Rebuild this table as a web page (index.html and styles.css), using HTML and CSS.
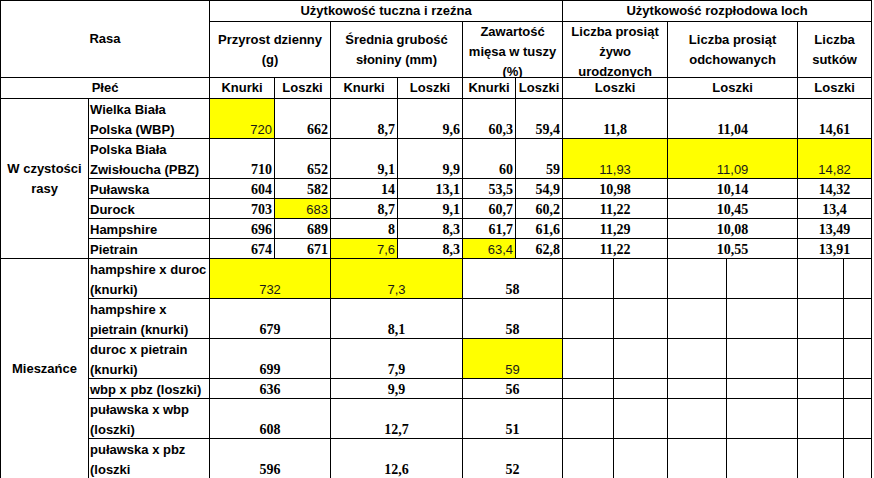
FILE: index.html
```html
<!DOCTYPE html>
<html lang="pl">
<head>
<meta charset="utf-8">
<title>Rasy świń</title>
<link rel="stylesheet" href="styles.css">
</head>
<body>
<table class="sheet">
  <colgroup>
    <col class="w88"><col class="w121"><col class="w65"><col class="w56"><col class="w67"><col class="w65"><col class="w53"><col class="w47"><col class="w51"><col class="w54"><col class="w59"><col class="w71"><col class="w46"><col class="w28">
  </colgroup>
  <thead>
    <tr class="r20">
      <th colspan="2" rowspan="2">Rasa</th>
      <th colspan="6">Użytkowość tuczna i rzeźna</th>
      <th colspan="6">Użytkowość rozpłodowa loch</th>
    </tr>
    <tr class="r56">
      <th colspan="2">Przyrost dzienny (g)</th>
      <th colspan="2">Średnia grubość słoniny (mm)</th>
      <th colspan="2" class="top"><div class="clip">Zawartość mięsa w tuszy (%)</div></th>
      <th colspan="2" class="top"><div class="clip">Liczba prosiąt żywo urodzonych</div></th>
      <th colspan="2">Liczba prosiąt odchowanych</th>
      <th colspan="2">Liczba sutków</th>
    </tr>
    <tr class="r20">
      <th colspan="2">Płeć</th>
      <th>Knurki</th><th>Loszki</th><th>Knurki</th><th>Loszki</th><th>Knurki</th><th>Loszki</th>
      <th colspan="2">Loszki</th><th colspan="2">Loszki</th><th colspan="2">Loszki</th>
    </tr>
  </thead>
  <tbody>
    <tr class="r40">
      <th rowspan="6" class="group">W czystości rasy</th>
      <td class="name"><div class="b">Wielka Biała Polska (WBP)</div></td>
      <td class="num y"><div class="b">720</div></td>
      <td class="num"><div class="b">662</div></td>
      <td class="num"><div class="b">8,7</div></td>
      <td class="num"><div class="b">9,6</div></td>
      <td class="num"><div class="b">60,3</div></td>
      <td class="num"><div class="b">59,4</div></td>
      <td class="num mid" colspan="2"><div class="b">11,8</div></td>
      <td class="num mid" colspan="2"><div class="b">11,04</div></td>
      <td class="num mid" colspan="2"><div class="b">14,61</div></td>
    </tr>
    <tr class="r40">
      <td class="name"><div class="b">Polska Biała Zwisłoucha (PBZ)</div></td>
      <td class="num"><div class="b">710</div></td>
      <td class="num"><div class="b">652</div></td>
      <td class="num"><div class="b">9,1</div></td>
      <td class="num"><div class="b">9,9</div></td>
      <td class="num"><div class="b">60</div></td>
      <td class="num"><div class="b">59</div></td>
      <td class="num mid y" colspan="2"><div class="b">11,93</div></td>
      <td class="num mid y" colspan="2"><div class="b">11,09</div></td>
      <td class="num mid y" colspan="2"><div class="b">14,82</div></td>
    </tr>
    <tr class="r20">
      <td class="name"><div class="b">Puławska</div></td>
      <td class="num"><div class="b">604</div></td>
      <td class="num"><div class="b">582</div></td>
      <td class="num"><div class="b">14</div></td>
      <td class="num"><div class="b">13,1</div></td>
      <td class="num"><div class="b">53,5</div></td>
      <td class="num"><div class="b">54,9</div></td>
      <td class="num mid" colspan="2"><div class="b">10,98</div></td>
      <td class="num mid" colspan="2"><div class="b">10,14</div></td>
      <td class="num mid" colspan="2"><div class="b">14,32</div></td>
    </tr>
    <tr class="r20">
      <td class="name"><div class="b">Durock</div></td>
      <td class="num"><div class="b">703</div></td>
      <td class="num y"><div class="b">683</div></td>
      <td class="num"><div class="b">8,7</div></td>
      <td class="num"><div class="b">9,1</div></td>
      <td class="num"><div class="b">60,7</div></td>
      <td class="num"><div class="b">60,2</div></td>
      <td class="num mid" colspan="2"><div class="b">11,22</div></td>
      <td class="num mid" colspan="2"><div class="b">10,45</div></td>
      <td class="num mid" colspan="2"><div class="b">13,4</div></td>
    </tr>
    <tr class="r20">
      <td class="name"><div class="b">Hampshire</div></td>
      <td class="num"><div class="b">696</div></td>
      <td class="num"><div class="b">689</div></td>
      <td class="num"><div class="b">8</div></td>
      <td class="num"><div class="b">8,3</div></td>
      <td class="num"><div class="b">61,7</div></td>
      <td class="num"><div class="b">61,6</div></td>
      <td class="num mid" colspan="2"><div class="b">11,29</div></td>
      <td class="num mid" colspan="2"><div class="b">10,08</div></td>
      <td class="num mid" colspan="2"><div class="b">13,49</div></td>
    </tr>
    <tr class="r20">
      <td class="name"><div class="b">Pietrain</div></td>
      <td class="num"><div class="b">674</div></td>
      <td class="num"><div class="b">671</div></td>
      <td class="num y"><div class="b">7,6</div></td>
      <td class="num"><div class="b">8,3</div></td>
      <td class="num y"><div class="b">63,4</div></td>
      <td class="num"><div class="b">62,8</div></td>
      <td class="num mid" colspan="2"><div class="b">11,22</div></td>
      <td class="num mid" colspan="2"><div class="b">10,55</div></td>
      <td class="num mid" colspan="2"><div class="b">13,91</div></td>
    </tr>

    <tr class="r40">
      <th rowspan="6" class="group">Mieszańce</th>
      <td class="name"><div class="b">hampshire x duroc (knurki)</div></td>
      <td class="num mid y" colspan="2"><div class="b">732</div></td>
      <td class="num mid y" colspan="2"><div class="b">7,3</div></td>
      <td class="num mid" colspan="2"><div class="b">58</div></td>
      <td></td><td></td><td></td><td></td><td></td><td></td>
    </tr>
    <tr class="r40">
      <td class="name"><div class="b">hampshire x pietrain (knurki)</div></td>
      <td class="num mid" colspan="2"><div class="b">679</div></td>
      <td class="num mid" colspan="2"><div class="b">8,1</div></td>
      <td class="num mid" colspan="2"><div class="b">58</div></td>
      <td></td><td></td><td></td><td></td><td></td><td></td>
    </tr>
    <tr class="r40">
      <td class="name"><div class="b">duroc x pietrain (knurki)</div></td>
      <td class="num mid" colspan="2"><div class="b">699</div></td>
      <td class="num mid" colspan="2"><div class="b">7,9</div></td>
      <td class="num mid y" colspan="2"><div class="b">59</div></td>
      <td></td><td></td><td></td><td></td><td></td><td></td>
    </tr>
    <tr class="r20">
      <td class="name"><div class="b">wbp x pbz (loszki)</div></td>
      <td class="num mid" colspan="2"><div class="b">636</div></td>
      <td class="num mid" colspan="2"><div class="b">9,9</div></td>
      <td class="num mid" colspan="2"><div class="b">56</div></td>
      <td></td><td></td><td></td><td></td><td></td><td></td>
    </tr>
    <tr class="r40">
      <td class="name"><div class="b">puławska x wbp (loszki)</div></td>
      <td class="num mid" colspan="2"><div class="b">608</div></td>
      <td class="num mid" colspan="2"><div class="b">12,7</div></td>
      <td class="num mid" colspan="2"><div class="b">51</div></td>
      <td></td><td></td><td></td><td></td><td></td><td></td>
    </tr>
    <tr class="r40">
      <td class="name"><div class="b">puławska x pbz (loszki</div></td>
      <td class="num mid" colspan="2"><div class="b">596</div></td>
      <td class="num mid" colspan="2"><div class="b">12,6</div></td>
      <td class="num mid" colspan="2"><div class="b">52</div></td>
      <td></td><td></td><td></td><td></td><td></td><td></td>
    </tr>
  </tbody>
</table>
</body>
</html>
```
FILE: styles.css
```css
html, body {
  margin: 0;
  padding: 0;
  background: #ffffff;
}

.sheet {
  border-collapse: collapse;
  table-layout: fixed;
  width: 872px;
  font-family: "Liberation Sans", Arial, sans-serif;
  font-size: 13px;
  font-weight: bold;
  line-height: 20px;
  color: #000;
}

.w88 { width: 88px; }
.w121 { width: 121px; }
.w65 { width: 65px; }
.w56 { width: 56px; }
.w67 { width: 67px; }
.w53 { width: 53px; }
.w47 { width: 47px; }
.w51 { width: 51px; }
.w54 { width: 54px; }
.w59 { width: 59px; }
.w71 { width: 71px; }
.w46 { width: 46px; }
.w28 { width: 28px; }

.r20 { height: 20px; }
.r40 { height: 40px; }
.r56 { height: 56px; }

.sheet th,
.sheet td {
  border: 1px solid #000;
  padding: 0 2px;
  overflow: hidden;
}

.sheet th {
  font-weight: bold;
  text-align: center;
  vertical-align: middle;
}

.sheet th.top {
  vertical-align: top;
}

.clip {
  height: 55px;
  overflow: hidden;
}

.sheet td {
  vertical-align: bottom;
}

.b {
  margin-bottom: -2px;
}

.sheet td.name {
  text-align: left;
  padding: 0 0 0 1px;
}

.num {
  text-align: right;
  padding-right: 1px;
  font-family: "Liberation Serif", "Times New Roman", serif;
  font-size: 14px;
}

.num.mid {
  text-align: center;
}

.y {
  background: #ffff00;
}

.num.y {
  font-family: "Liberation Sans", Arial, sans-serif;
  font-weight: normal;
  font-size: 13px;
  color: #1a1a1a;
}
```
